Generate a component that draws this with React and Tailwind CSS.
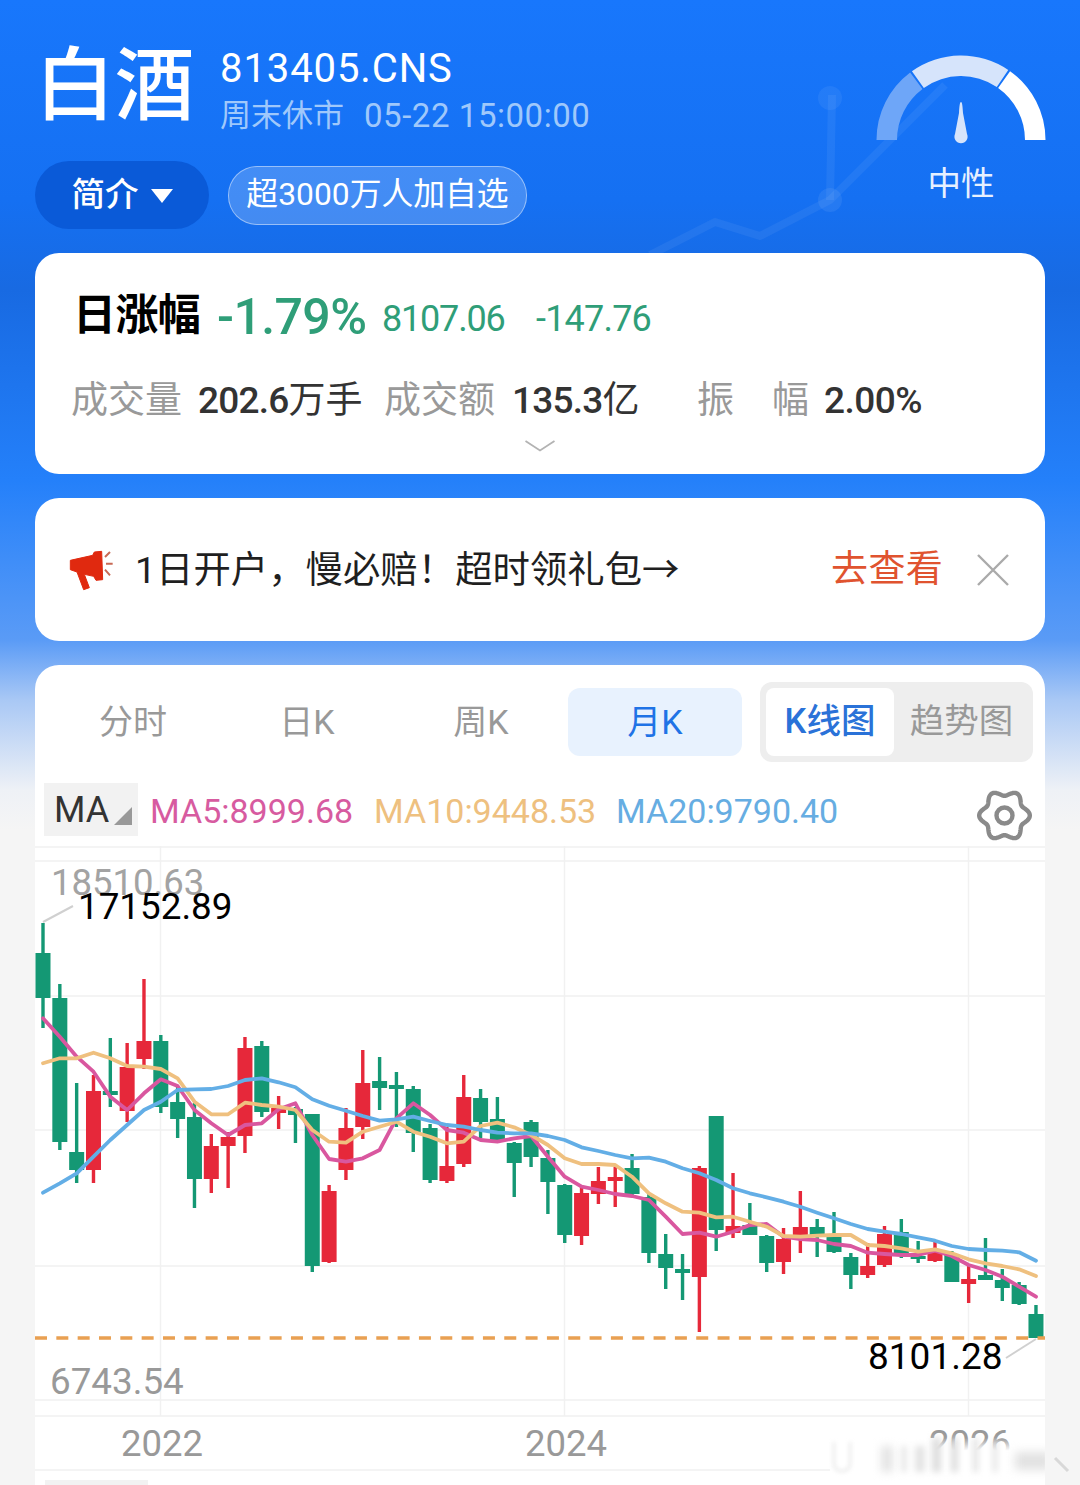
import React from "react";

const CANDLES = [
  ["g",923,953,998,1028],["g",984,998,1142,1150],["g",1083,1152,1170,1183],["r",1075,1091,1170,1183],
  ["g",1038,1091,1095,1107],["r",1043,1067,1111,1122],["r",979,1041,1059,1069],["g",1035,1041,1107,1113],
  ["g",1087,1102,1119,1138],["g",1103,1117,1179,1208],["r",1134,1146,1179,1193],["r",1132,1137,1146,1188],
  ["r",1037,1048,1136,1153],["g",1041,1046,1112,1117],["r",1096,1108,1113,1129],["g",1107,1109,1115,1143],
  ["g",1114,1114,1266,1272],["r",1185,1191,1262,1263],["r",1108,1128,1170,1180],["r",1050,1083,1127,1139],
  ["g",1057,1081,1088,1110],["g",1072,1085,1089,1127],["g",1086,1089,1133,1152],["g",1124,1128,1180,1183],
  ["r",1127,1166,1181,1183],["r",1075,1097,1164,1167],["g",1089,1098,1122,1138],["g",1097,1119,1140,1140],
  ["g",1142,1143,1163,1197],["g",1120,1122,1157,1167],["g",1150,1158,1182,1214],
  ["g",1184,1185,1235,1243],["r",1186,1193,1236,1245],["r",1167,1181,1194,1204],["r",1167,1177,1181,1207],
  ["g",1154,1168,1194,1197],["g",1193,1197,1253,1263],["g",1234,1254,1268,1289],["g",1254,1269,1273,1300],
  ["r",1166,1168,1277,1332],["g",1116,1116,1230,1251],["r",1173,1226,1233,1238],["g",1203,1225,1235,1235],
  ["g",1235,1236,1263,1272],["r",1228,1239,1262,1274],["r",1191,1227,1237,1253],["g",1219,1227,1235,1257],
  ["g",1212,1237,1252,1253],["g",1253,1257,1275,1289],["r",1243,1266,1275,1278],["r",1226,1234,1265,1267],
  ["g",1219,1232,1253,1258],["g",1241,1256,1259,1263],["r",1242,1253,1261,1262],["g",1251,1255,1282,1282],
  ["r",1265,1279,1284,1303],["g",1238,1275,1280,1280],["g",1269,1280,1288,1301],["g",1282,1285,1304,1305],
  ["g",1305,1314,1338,1338],
];

const A = (y) => y / 3 + 840;
const B = (y) => y / 3 + 1090;
const join = (a, b) => [...a.map(A), ...b.map(B)];

const MA5 = join(
  [535,590,650,695,770,810,760,718,738,810,850,885,855,850,808,790,885,957,965,955,930,835,790,825,870,878,900,905,895,888,950],
  [260,290,300,312,318,330,380,432,428,440,425,405,402,440,447,450,462,468,488,492,495,495,482,498,525,540,560,590,620]
);
const MA10 = join(
  [670,655,655,638,655,678,680,687,715,785,823,823,788,795,800,810,870,905,908,875,860,845,875,890,910,905,858,848,862,885,915],
  [205,222,222,225,260,310,340,365,368,382,380,395,410,438,440,437,435,435,465,468,475,485,478,490,508,520,528,538,558]
);
const MA20 = join(
  [1058,1030,1000,950,900,855,810,785,750,748,747,738,720,715,727,742,778,797,812,828,842,838,830,843,855,860,870,878,880,880,888],
  [150,172,183,195,205,203,215,235,250,270,295,310,322,335,350,368,385,402,417,425,432,442,452,468,477,480,482,487,512]
);

const cx = (i) => 43 + i * 16.83;
const pts = (ys) => ys.map((y, i) => `${cx(i).toFixed(1)},${y.toFixed(1)}`).join(" ");

const arc = (a0, a1, R = 84.5, r = 64) => {
  const p = (rad, a) => {
    const t = (a * Math.PI) / 180;
    return `${(85 + rad * Math.cos(t)).toFixed(2)} ${(85 - rad * Math.sin(t)).toFixed(2)}`;
  };
  return `M${p(R, a0)} A${R} ${R} 0 0 1 ${p(R, a1)} L${p(r, a1)} A${r} ${r} 0 0 0 ${p(r, a0)} Z`;
};

const gearPath = (() => {
  const out = [];
  for (let i = 0; i <= 180; i++) {
    const t = (i / 180) * Math.PI * 2;
    const r = 22.5 + 2.8 * Math.cos(6 * t);
    out.push(`${(27.5 + r * Math.cos(t)).toFixed(2)},${(25.5 + r * Math.sin(t)).toFixed(2)}`);
  }
  return "M" + out.join(" L") + " Z";
})();

function Gauge() {
  return (
    <svg width="170" height="90" viewBox="0 0 170 90">
      <path d={arc(180, 127)} fill="#6ea6f8" />
      <path d={arc(125.5, 56)} fill="#d6e4fb" />
      <path d={arc(54.5, 0)} fill="#ffffff" />
      <path d="M85 47 C86 47 86.6 50 87 58 L91 79 A6.6 6.6 0 1 1 79 79 L83 58 C83.4 50 84 47 85 47 Z" fill="#d6e4fb" />
    </svg>
  );
}

function Chart() {
  return (
    <div className="relative h-[639px] w-full overflow-hidden">
      <svg className="absolute inset-0" width="1010" height="639" viewBox="35 846 1010 639">
        <g stroke="#f1f1f1" strokeWidth="1.4">
          {[847, 861, 996, 1130, 1266, 1400, 1416, 1470].map((y) => (
            <line key={y} x1="35" x2="1045" y1={y} y2={y} />
          ))}
          {[160.5, 564.5, 968.5].map((x) => (
            <line key={x} x1={x} x2={x} y1="846" y2="1416" />
          ))}
        </g>
        {CANDLES.map(([c, hi, top, bot, lo], i) => {
          const col = c === "r" ? "#e6283a" : "#149874";
          const x = cx(i);
          return (
            <g key={i} fill={col}>
              <rect x={x - 1.7} y={hi} width="3.4" height={lo - hi} />
              <rect x={x - 7.5} y={top} width="15" height={bot - top} />
            </g>
          );
        })}
        <g fill="none" strokeWidth="3.8" strokeLinejoin="round" strokeLinecap="round">
          <polyline points={pts(MA5)} stroke="#d9579f" />
          <polyline points={pts(MA10)} stroke="#efc07f" />
          <polyline points={pts(MA20)} stroke="#63aee6" />
        </g>
        <line x1="35" x2="1045" y1="1338" y2="1338" stroke="#e9a052" strokeWidth="3.4" strokeDasharray="12 9.33" />
        <line x1="43" y1="922" x2="73" y2="906" stroke="#d0d0d0" strokeWidth="2" />
        <line x1="1006" y1="1358" x2="1036" y2="1339" stroke="#d0d0d0" strokeWidth="2" />
      </svg>

      <span className="absolute left-[16px] top-[18px] text-[36.5px] leading-[38px] text-[#a3a3a3]">18510.63</span>
      <span className="absolute left-[43px] top-[42px] text-[36.8px] leading-[38px] text-black">17152.89</span>
      <span className="absolute left-[15px] top-[517px] text-[36.8px] leading-[38px] text-[#999999]">6743.54</span>
      <span className="absolute left-[833px] top-[492px] text-[37px] leading-[38px] text-black">8101.28</span>
      <span className="absolute left-[86px] top-[579px] text-[36.5px] leading-[38px] text-[#999999]">2022</span>
      <span className="absolute left-[490px] top-[579px] text-[36.5px] leading-[38px] text-[#999999]">2024</span>
      <span className="absolute left-[894px] top-[579px] text-[36.5px] leading-[38px] text-[#999999]">2026</span>

      {/* blurred watermark over the lower right corner */}
      <div className="absolute left-[795px] top-[592px] h-[36px] w-[220px] bg-gradient-to-b from-white/0 to-white to-[35%]" />
      <div className="absolute left-[798px] top-[596px] h-[30px] w-[18px] rounded-b-lg border-x-2 border-b-2 border-[#e4e4e4] bg-white blur-[2px]" />
      <div className="absolute left-[846px] top-[600px] h-[26px] w-[12px] bg-[#e4e4e4] blur-[4px]" />
      <div className="absolute left-[866px] top-[600px] h-[26px] w-[6px] bg-[#e8e8e8] blur-[3px]" />
      <div className="absolute left-[880px] top-[600px] h-[26px] w-[10px] bg-[#e4e4e4] blur-[3px]" />
      <div className="absolute left-[897px] top-[592px] h-[34px] w-[9px] bg-[#dedede] blur-[3px]" />
      <div className="absolute left-[916px] top-[592px] h-[34px] w-[7px] bg-[#dedede] blur-[3px]" />
      <div className="absolute left-[938px] top-[592px] h-[34px] w-[5px] bg-[#e0e0e0] blur-[3px]" />
      <div className="absolute left-[958px] top-[594px] h-[32px] w-[4px] bg-[#e0e0e0] blur-[3px]" />
      <div className="absolute left-[980px] top-[606px] h-[18px] w-[36px] bg-[#e2e2e2] blur-[5px]" />
    </div>
  );
}

export default function App() {
  return (
    <div className="relative h-[1485px] w-[1080px] overflow-hidden bg-[linear-gradient(180deg,#1877fc_0px,#1570f2_200px,#186ae2_290px,#2480fa_480px,#5a9bf6_640px,#a9c8f5_700px,#eef1f6_790px,#f5f5f5_830px)] font-['Roboto','Noto_Sans_CJK_SC',sans-serif]">
      <svg className="absolute left-[640px] top-[70px]" width="340" height="190" viewBox="640 70 340 190">
        <g fill="none" stroke="#ffffff" strokeOpacity="0.06" strokeWidth="8" strokeLinejoin="round">
          <polyline points="650,255 715,222 760,236 830,200 945,85" />
          <polyline points="830,200 832,95" />
        </g>
        <circle cx="830" cy="98" r="12" fill="#ffffff" fillOpacity="0.06" />
        <circle cx="830" cy="200" r="12" fill="#ffffff" fillOpacity="0.07" />
      </svg>

      {/* header */}
      <header className="relative flex h-[253px] justify-between">
        <div className="flex flex-col pl-[35px]">
          <div className="flex h-[161px] items-start">
            <h1 className="mt-[41px] whitespace-nowrap text-[80px] font-medium leading-[90px] tracking-[-0.5px] text-white">白酒</h1>
            <div className="ml-[26px] mt-[46px] flex flex-col">
              <span className="whitespace-nowrap text-[40px] leading-[45px] tracking-[0.9px] text-white">813405.CNS</span>
              <span className="mt-[6px] flex whitespace-nowrap text-[31px] leading-[38px] text-[#9fc8fb]">
                <span>周末休市</span>
                <span className="ml-[20px] text-[33px] tracking-[0.55px]">05-22 15:00:00</span>
              </span>
            </div>
          </div>
          <div className="flex items-center">
            <button className="flex h-[68px] w-[174px] items-center justify-center gap-[12px] rounded-[34px] bg-[#0a5ad8] text-[33.5px] font-medium text-white">
              简介
              <span className="mt-[2px] h-0 w-0 border-x-[11px] border-t-[14px] border-x-transparent border-t-white" />
            </button>
            <span className="ml-[19px] flex h-[59px] w-[299px] items-center justify-center whitespace-nowrap rounded-[29px] border border-white/45 bg-white/20 text-[31.8px] text-white">
              超3000万人加自选
            </span>
          </div>
        </div>
        <div className="mr-[34px] flex w-[170px] flex-col items-center pt-[55px]">
          <Gauge />
          <span className="mt-[19px] text-[33.5px] leading-[40px] text-[#e6f0ff]">中性</span>
        </div>
      </header>

      {/* quote card */}
      <section className="mx-[35px] flex h-[221px] flex-col rounded-[24px] bg-white">
        <div className="mt-[30px] flex items-center pl-[38px]">
          <span className="w-[127px] whitespace-nowrap text-[43px] font-bold leading-[56px] tracking-[-0.6px] text-black">日涨幅</span>
          <span className="ml-[17px] mt-[4px] w-[148px] whitespace-nowrap text-[50px] font-medium leading-[56px] tracking-[-0.6px] text-[#2f9e78]">-1.79%</span>
          <span className="ml-[17px] mt-[8px] w-[122px] whitespace-nowrap text-[36px] leading-[56px] tracking-[-1.2px] text-[#2f9e78]">8107.06</span>
          <span className="ml-[32px] mt-[8px] whitespace-nowrap text-[36px] leading-[56px] tracking-[-0.8px] text-[#2f9e78]">-147.76</span>
        </div>
        <div className="mt-[30px] flex items-center pl-[36px] text-[37px] leading-[48px]">
          <span className="w-[111px] whitespace-nowrap text-[#999999]">成交量</span>
          <span className="ml-[16px] w-[162px] whitespace-nowrap text-[#333333]">
            <span className="font-medium tracking-[-0.8px]">202.6</span>万手
          </span>
          <span className="ml-[24px] w-[111px] whitespace-nowrap text-[#999999]">成交额</span>
          <span className="ml-[17px] w-[124px] whitespace-nowrap text-[#333333]">
            <span className="font-medium tracking-[-0.8px]">135.3</span>亿
          </span>
          <span className="ml-[61px] w-[36px] text-[#999999]">振</span>
          <span className="ml-[39px] w-[36px] text-[#999999]">幅</span>
          <span className="ml-[16px] whitespace-nowrap font-medium tracking-[-0.5px] text-[#333333]">2.00%</span>
        </div>
        <svg className="mx-auto mt-[14px]" width="32" height="14" viewBox="0 0 32 14">
          <path d="M1.5 2 L16 11.5 L30.5 2" fill="none" stroke="#b3b3b3" strokeWidth="1.8" />
        </svg>
      </section>

      {/* promo card */}
      <section className="mx-[35px] mt-[24px] flex h-[143px] items-center rounded-[24px] bg-white">
        <svg className="ml-[31px]" width="50" height="45" viewBox="105 140 150 135">
          <path d="M118 180 L185 165 L190 155 L212 153 L215 238 L195 240 L188 228 L160 222 L175 262 L158 268 L138 215 L118 208 Z" fill="#e0290f" strokeLinejoin="round" stroke="#e0290f" strokeWidth="3" />
          <path d="M222 170 L237 155 M225 190 L245 190 M222 208 L237 225" stroke="#c86a55" strokeWidth="6" fill="none" />
        </svg>
        <span className="ml-[19px] w-[543px] whitespace-nowrap text-[37.4px] leading-[48px] text-[#1f1f1f]">1日开户，慢必赔！超时领礼包→</span>
        <span className="ml-[153px] w-[110px] whitespace-nowrap text-[37px] leading-[48px] tracking-[0.4px] text-[#e0532f]">去查看</span>
        <svg className="ml-[35px]" width="34" height="34" viewBox="0 0 34 34">
          <path d="M2 2 L32 32 M32 2 L2 32" stroke="#aaaaaa" strokeWidth="2.4" fill="none" />
        </svg>
      </section>

      {/* chart card */}
      <section className="mx-[35px] mt-[24px] h-[820px] rounded-t-[24px] bg-white">
        <div className="flex h-[118px] items-start pl-[11px] pt-[17px]">
          <div className="mt-[6px] flex h-[68px] w-[696px]">
            {["分时", "日K", "周K", "月K"].map((t, i) => (
              <span
                key={t}
                className={
                  i === 3
                    ? "flex w-[174px] items-center justify-center rounded-[12px] bg-[#e8f2fe] text-[34px] text-[#1f73e6]"
                    : "flex w-[174px] items-center justify-center text-[34px] text-[#999999]"
                }
              >
                {t}
              </span>
            ))}
          </div>
          <div className="ml-[18px] flex h-[80px] w-[273px] rounded-[12px] bg-[#eeeeee] p-[6px]">
            <span className="flex w-[128px] shrink-0 items-center justify-center whitespace-nowrap rounded-[8px] bg-white text-[34.5px] font-medium text-[#2a72d8]">K线图</span>
            <span className="flex w-[133px] shrink-0 items-center justify-center whitespace-nowrap pl-[2px] text-[34.5px] text-[#999999]">趋势图</span>
          </div>
        </div>
        <div className="flex h-[63px] items-start">
          <div className="relative ml-[9px] flex h-[53px] w-[94px] items-center bg-[#f2f2f2] pl-[10px] text-[36px] leading-none text-[#333333]">
            MA
            <span className="absolute left-[70px] top-[24px] h-0 w-0 border-b-[18px] border-l-[18px] border-b-[#999999] border-l-transparent" />
          </div>
          <div className="ml-[12px] mt-[1px] flex h-[53px] items-center text-[34px] leading-none">
            <span className="w-[204px] whitespace-nowrap text-[#d75ba0]">MA5:8999.68</span>
            <span className="ml-[20px] w-[222px] whitespace-nowrap text-[#eec07f]">MA10:9448.53</span>
            <span className="ml-[20px] w-[222px] whitespace-nowrap text-[#66ade2]">MA20:9790.40</span>
          </div>
          <svg className="ml-[139px] mt-[7px]" width="55" height="51" viewBox="0 0 55 51">
            <path d={gearPath} fill="none" stroke="#8a8a8a" strokeWidth="4.4" strokeLinejoin="round" />
            <circle cx="27.5" cy="25.5" r="8" fill="none" stroke="#8a8a8a" strokeWidth="4.4" />
          </svg>
        </div>
        <Chart />
      </section>

      <div className="absolute bottom-0 left-[45px] h-[5px] w-[103px] bg-[#f2f2f2]" />
      <svg className="absolute left-[1052px] top-[1456px]" width="20" height="18" viewBox="0 0 20 18">
        <path d="M3 2 L16 15" stroke="#d8d8d8" strokeWidth="3" fill="none" />
      </svg>
    </div>
  );
}
